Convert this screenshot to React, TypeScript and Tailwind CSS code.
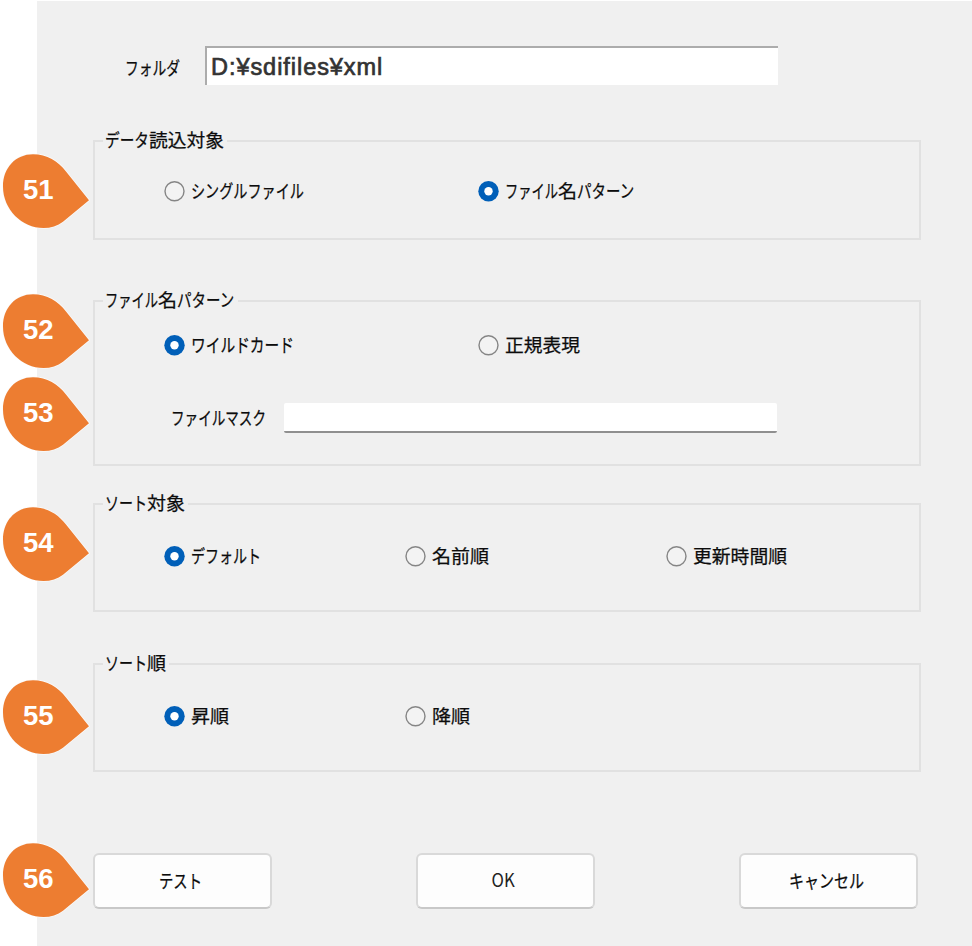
import type { ReactNode } from "react";

type Run = [text: string, width: number];

const EM = 18.6;

/** Gothic UI text: each run is condensed horizontally to its own width. */
function Label({ runs }: { runs: Run[] }) {
  return (
    <span className="-mt-0.5 flex h-6 text-[18.6px] leading-6 font-normal whitespace-nowrap text-[#0c0c0c] [-webkit-text-stroke:0.25px_#0c0c0c]">
      {runs.map(([text, width]) => (
        <span key={text} className="block h-6 shrink-0" style={{ width }}>
          <span
            className="block w-max origin-left"
            style={{ transform: `scaleX(${width / (text.length * EM)})` }}
          >
            {text}
          </span>
        </span>
      ))}
    </span>
  );
}

function Radio({ runs, checked = false }: { runs: Run[]; checked?: boolean }) {
  return (
    <div className="flex h-6 items-center gap-1.5">
      <svg viewBox="0 0 21 21" className="size-[21px] shrink-0">
        {checked ? (
          <>
            <circle cx="10.5" cy="10.3" r="10.2" fill="#005fb8" />
            <circle cx="10.5" cy="10.3" r="4.2" fill="#fff" />
          </>
        ) : (
          <circle cx="10.5" cy="10.3" r="9.5" fill="#f3f3f3" stroke="#858585" strokeWidth="1.4" />
        )}
      </svg>
      <Label runs={runs} />
    </div>
  );
}

function Group({ legend, className, children }: { legend: Run[]; className: string; children: ReactNode }) {
  return (
    <section className={`w-[828px] border-2 border-[#e1e1e1] ${className}`}>
      <div className="-mt-[13px] ml-2 flex h-6 w-fit bg-[#f0f0f0] pr-[3px] pl-0.5">
        <Label runs={legend} />
      </div>
      {children}
    </section>
  );
}

function PushButton({ children }: { children: ReactNode }) {
  return (
    <button className="flex h-[56px] w-[179px] items-center justify-center rounded-[6px] border-2 border-[#d9d9d9] border-b-[#c8c8c8] bg-[#fdfdfd] pr-1">
      {children}
    </button>
  );
}

function Marker({ n, className }: { n: number; className: string }) {
  return (
    <div className={`absolute left-0 h-[80px] w-[92px] ${className}`}>
      <svg viewBox="0 0 92 80" className="absolute inset-0 h-full w-full">
        <path
          d="M89 49.3 L66 20.5 C58 10.2 47 3.3 33 3.3 C15.5 3.3 3 17 3 35.5 C3 58.5 22 77 43.5 77 C51 77 57.5 75 63 70.7 Z"
          fill="#ed7d31"
          stroke="#fbfbfb"
          strokeWidth="1.4"
          paintOrder="stroke"
        />
      </svg>
      <span className="absolute top-[23px] left-[23px] font-['Liberation_Sans',Arial,sans-serif] text-[27.5px] leading-8 font-bold text-white">
        {n}
      </span>
    </div>
  );
}

export default function App() {
  return (
    <div className="relative h-[946px] w-[972px] overflow-hidden bg-white pt-px pl-[37px] font-['Noto_Sans_CJK_JP',sans-serif]">
      <main className="flex h-[945px] flex-col bg-[#f0f0f0] pl-14">
        <div className="mt-[45px] ml-8 flex h-[39px] items-center">
          <div className="mt-1 w-20">
            <Label runs={[["フォルダ", 55]]} />
          </div>
          <div className="flex h-[39px] w-[573px] items-center border-t-2 border-l-2 border-t-[#acacac] border-l-[#acacac] bg-white pt-px pl-1">
            <span className="font-['Liberation_Sans',Arial,sans-serif] text-[23.5px] leading-8 tracking-[0.95px] text-[#333] [-webkit-text-stroke:0.7px_#333]">
              D:¥sdifiles¥xml
            </span>
          </div>
        </div>

        <Group className="mt-[55px] h-[100px]" legend={[["データ", 44], ["読込対象", 75]]}>
          <div className="mt-[26px] grid grid-cols-[314px_auto] pl-[69px]">
            <Radio runs={[["シングルファイル", 113]]} />
            <Radio checked runs={[["ファイル", 53], ["名", 19], ["パターン", 58]]} />
          </div>
        </Group>

        <Group className="mt-[60px] h-[166px]" legend={[["ファイル", 53], ["名", 19], ["パターン", 58]]}>
          <div className="mt-[20px] grid grid-cols-[314px_auto] pl-[69px]">
            <Radio checked runs={[["ワイルドカード", 103]]} />
            <Radio runs={[["正規表現", 75]]} />
          </div>
          <div className="mt-[46px] flex h-[30px] items-center pl-[76px]">
            <div className="w-[113px]">
              <Label runs={[["ファイルマスク", 95]]} />
            </div>
            <div className="h-[30px] w-[493px] rounded-[2px] border-b-2 border-b-[#8f8f8f] bg-white" />
          </div>
        </Group>

        <Group className="mt-[37px] h-[109px]" legend={[["ソート", 42], ["対象", 38]]}>
          <div className="mt-[28px] grid grid-cols-[241px_261px_auto] pl-[69px]">
            <Radio checked runs={[["デフォルト", 70]]} />
            <Radio runs={[["名前順", 57]]} />
            <Radio runs={[["更新時間順", 94]]} />
          </div>
        </Group>

        <Group className="mt-[51px] h-[109px]" legend={[["ソート", 42], ["順", 19]]}>
          <div className="mt-[28px] grid grid-cols-[241px_auto] pl-[69px]">
            <Radio checked runs={[["昇順", 38]]} />
            <Radio runs={[["降順", 38]]} />
          </div>
        </Group>

        <div className="mt-[81px] flex gap-36">
          <PushButton>
            <Label runs={[["テスト", 43]]} />
          </PushButton>
          <PushButton>
            <span className="-mt-1 inline-block scale-x-[.88] text-[19px] leading-6 text-[#222]">OK</span>
          </PushButton>
          <PushButton>
            <Label runs={[["キャンセル", 75]]} />
          </PushButton>
        </div>
      </main>

      <Marker n={51} className="top-[151px]" />
      <Marker n={52} className="top-[291px]" />
      <Marker n={53} className="top-[374px]" />
      <Marker n={54} className="top-[504px]" />
      <Marker n={55} className="top-[677px]" />
      <Marker n={56} className="top-[840px]" />
    </div>
  );
}
